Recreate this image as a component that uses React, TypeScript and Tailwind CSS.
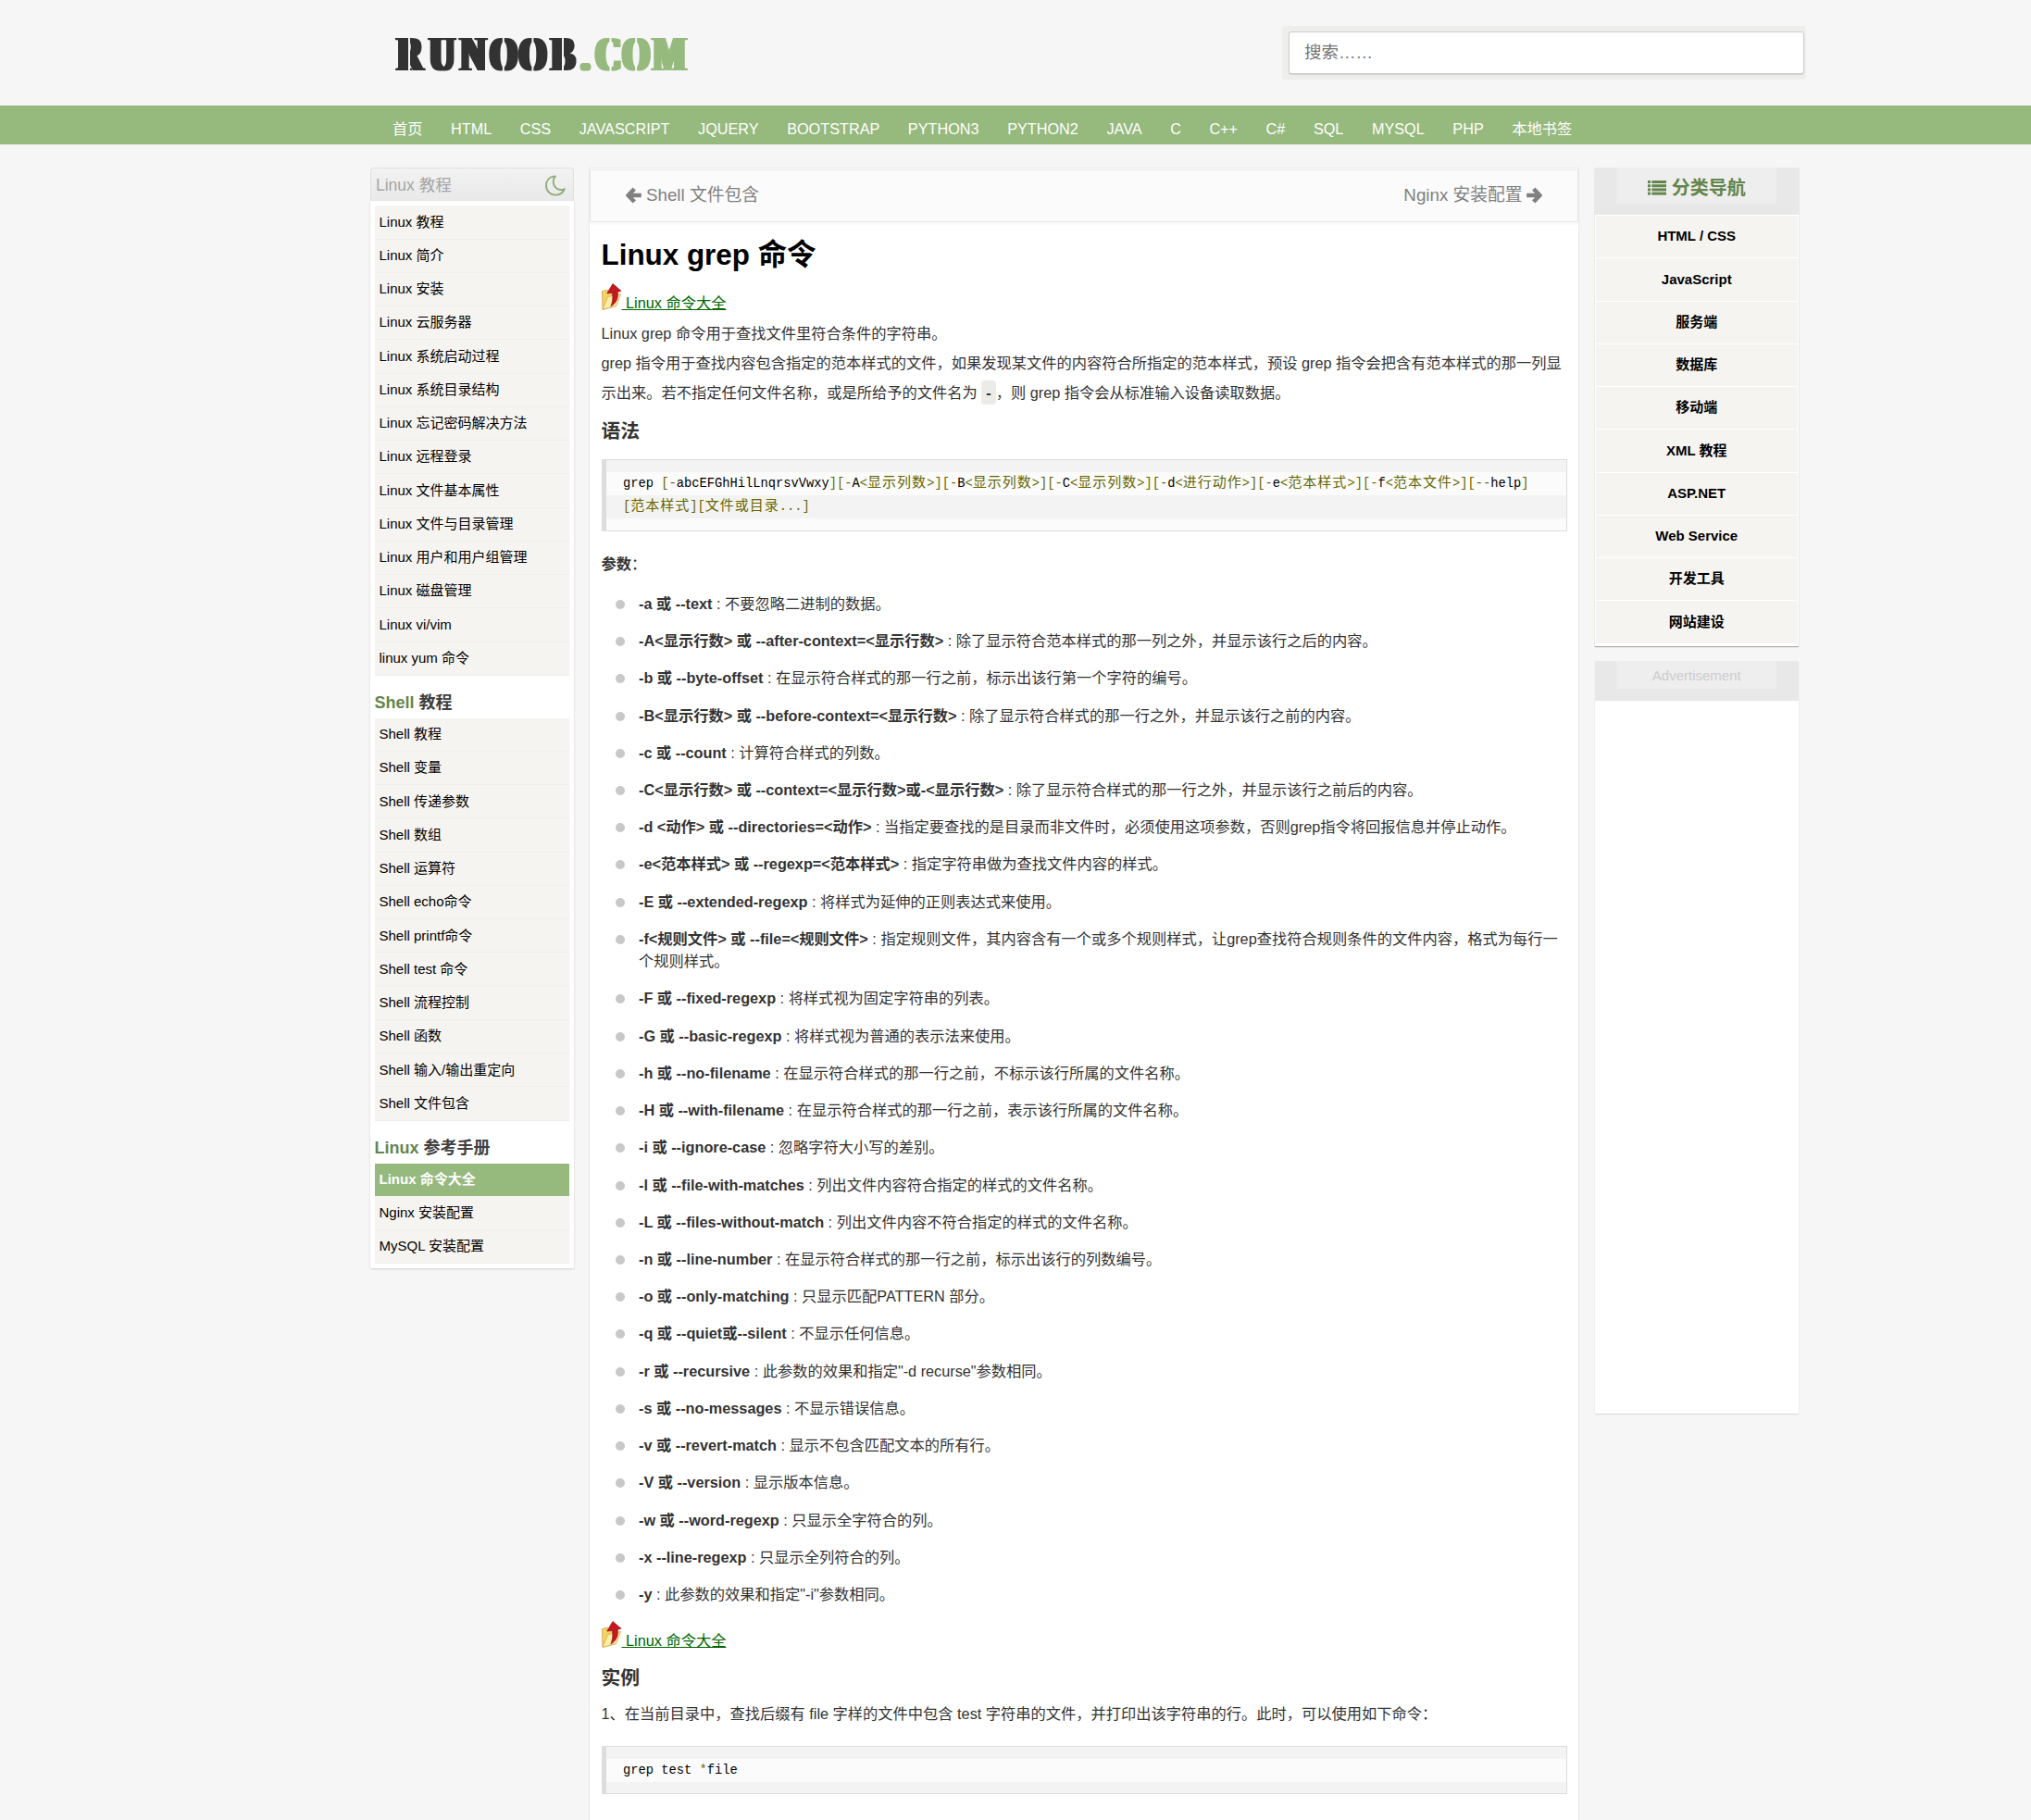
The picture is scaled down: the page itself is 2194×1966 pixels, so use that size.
import React from "react";

const NAV = [
  "首页", "HTML", "CSS", "JAVASCRIPT", "JQUERY", "BOOTSTRAP", "PYTHON3", "PYTHON2",
  "JAVA", "C", "C++", "C#", "SQL", "MYSQL", "PHP", "本地书签",
];

const LINUX = [
  "Linux 教程", "Linux 简介", "Linux 安装", "Linux 云服务器", "Linux 系统启动过程",
  "Linux 系统目录结构", "Linux 忘记密码解决方法", "Linux 远程登录", "Linux 文件基本属性",
  "Linux 文件与目录管理", "Linux 用户和用户组管理", "Linux 磁盘管理", "Linux vi/vim", "linux yum 命令",
];

const SHELL = [
  "Shell 教程", "Shell 变量", "Shell 传递参数", "Shell 数组", "Shell 运算符", "Shell echo命令",
  "Shell printf命令", "Shell test 命令", "Shell 流程控制", "Shell 函数", "Shell 输入/输出重定向", "Shell 文件包含",
];

const MANUAL = ["Linux 命令大全", "Nginx 安装配置", "MySQL 安装配置"];

const CATEGORIES = [
  "HTML / CSS", "JavaScript", "服务端", "数据库", "移动端", "XML 教程", "ASP.NET",
  "Web Service", "开发工具", "网站建设",
];

const OPTIONS: [string, string][] = [
  ["-a 或 --text", "不要忽略二进制的数据。"],
  ["-A<显示行数> 或 --after-context=<显示行数>", "除了显示符合范本样式的那一列之外，并显示该行之后的内容。"],
  ["-b 或 --byte-offset", "在显示符合样式的那一行之前，标示出该行第一个字符的编号。"],
  ["-B<显示行数> 或 --before-context=<显示行数>", "除了显示符合样式的那一行之外，并显示该行之前的内容。"],
  ["-c 或 --count", "计算符合样式的列数。"],
  ["-C<显示行数> 或 --context=<显示行数>或-<显示行数>", "除了显示符合样式的那一行之外，并显示该行之前后的内容。"],
  ["-d <动作> 或 --directories=<动作>", "当指定要查找的是目录而非文件时，必须使用这项参数，否则grep指令将回报信息并停止动作。"],
  ["-e<范本样式> 或 --regexp=<范本样式>", "指定字符串做为查找文件内容的样式。"],
  ["-E 或 --extended-regexp", "将样式为延伸的正则表达式来使用。"],
  ["-f<规则文件> 或 --file=<规则文件>", "指定规则文件，其内容含有一个或多个规则样式，让grep查找符合规则条件的文件内容，格式为每行一个规则样式。"],
  ["-F 或 --fixed-regexp", "将样式视为固定字符串的列表。"],
  ["-G 或 --basic-regexp", "将样式视为普通的表示法来使用。"],
  ["-h 或 --no-filename", "在显示符合样式的那一行之前，不标示该行所属的文件名称。"],
  ["-H 或 --with-filename", "在显示符合样式的那一行之前，表示该行所属的文件名称。"],
  ["-i 或 --ignore-case", "忽略字符大小写的差别。"],
  ["-l 或 --file-with-matches", "列出文件内容符合指定的样式的文件名称。"],
  ["-L 或 --files-without-match", "列出文件内容不符合指定的样式的文件名称。"],
  ["-n 或 --line-number", "在显示符合样式的那一行之前，标示出该行的列数编号。"],
  ["-o 或 --only-matching", "只显示匹配PATTERN 部分。"],
  ["-q 或 --quiet或--silent", "不显示任何信息。"],
  ["-r 或 --recursive", "此参数的效果和指定\"-d recurse\"参数相同。"],
  ["-s 或 --no-messages", "不显示错误信息。"],
  ["-v 或 --revert-match", "显示不包含匹配文本的所有行。"],
  ["-V 或 --version", "显示版本信息。"],
  ["-w 或 --word-regexp", "只显示全字符合的列。"],
  ["-x --line-regexp", "只显示全列符合的列。"],
  ["-y", "此参数的效果和指定\"-i\"参数相同。"],
];

/* Wordmark: bold serif thickened sideways, with stencil slits laid over it. */
function Logo() {
  return (
    <svg width="322" height="70" viewBox="0 -16 322 70" className="block">
      <defs>
        <filter id="heavy" x="-5%" y="-20%" width="110%" height="140%">
          <feMorphology operator="dilate" radius="3 0.3" />
        </filter>
      </defs>
      <g filter="url(#heavy)">
        <g fontFamily="'Liberation Serif', serif" fontWeight="700" fontSize="53" transform="scale(0.71 1)">
          <text y="39.2" x="7.3 56.2 103.5 148.5 193 241.500" fill="#333333">RUNOOB</text>
          <text y="39.2" x="287 309 350 396.500" fill="#96b97d">.COM</text>
        </g>
      </g>
      <g stroke="#f6f6f6" strokeWidth="2">
        <path d="M18 2v39M119.800 2v39M151.400 2v39M184 2v39M235.500 2v39M263.200 2v39" />
      </g>
    </svg>
  );
}

function Moon() {
  return (
    <svg width="22" height="23" viewBox="0 0 22 23" fill="none" className="block">
      <path
        d="M8.6 1.6C3.9 2.6 1 6.700 1 11.400C1 17 5.400 21.600 11 21.600C15.500 21.600 19.300 19 20.800 15.100C18.900 16 17.200 16.300 15.500 15.900C11.600 15.100 8.900 11.600 8.700 7.400C8.600 5.200 9.400 3.300 10.900 1.400C10.100 1.300 9.300 1.400 8.600 1.600Z"
        stroke="#8fad7c"
        strokeWidth="1.9"
        strokeLinejoin="round"
      />
    </svg>
  );
}

function Arrow({ flip = false }: { flip?: boolean }) {
  return (
    <svg width="17" height="18" viewBox="0 0 17 18" className={flip ? "block -scale-x-100" : "block"}>
      <path
        d="M9.300 2L2.700 9L9.300 16M3 9H16.800"
        fill="none"
        stroke="#808080"
        strokeWidth="4.600"
      />
    </svg>
  );
}

function ListIcon() {
  return (
    <svg width="20" height="16" viewBox="0 0 20 16" fill="#64854c" className="block">
      {[0, 4.2, 8.4, 12.6].map((y) => (
        <g key={y}>
          <rect x="0" y={y} width="3" height="3" />
          <rect x="4.300" y={y} width="15.700" height="3" />
        </g>
      ))}
    </svg>
  );
}

function FolderUp() {
  return (
    <svg width="22" height="29" viewBox="0 0 23 29" preserveAspectRatio="none" className="mb-px block">
      <path d="M0.500 8.500L7 7.200L8.500 9L15 8V25L1 28.300Z" fill="#f3d469" stroke="#cfa040" strokeWidth="0.800" />
      <path d="M1 28.300L7 14.500L21.500 11.500L16.500 24.500Z" fill="#fdf0a6" stroke="#d2a441" strokeWidth="0.800" />
      <path
        d="M12.500 0.500L22 8.300L18 9.200C19 16 16.500 21.500 10.300 24.800C12.500 20 12.900 15 12 10.500L6 11Z"
        fill="#c41a1e"
        stroke="#8e0f14"
        strokeWidth="0.700"
      />
    </svg>
  );
}

function SideList({ items, active }: { items: string[]; active?: string }) {
  return (
    <ul className="mx-[5px]">
      {items.map((t) => (
        <li
          key={t}
          className={
            t === active
              ? "flex h-[36.25px] items-center border-b-[1.25px] border-[#f6f4f0] bg-[#96b97d] px-[4.5px] text-[15px] font-bold text-white"
              : "flex h-[36.25px] items-center border-b-[1.25px] border-[#eeeeee] bg-[#f6f4f0] px-[4.5px] text-[15px] text-black"
          }
        >
          {t}
        </li>
      ))}
    </ul>
  );
}

function SideTitle({ green, rest }: { green: string; rest: string }) {
  return (
    <h2 className="flex h-[45.900px] items-end px-[4.5px] pb-[3.500px] text-[18px] leading-[26px] font-bold text-[#404040]">
      <span className="whitespace-pre text-[#64854c]">{green} </span>
      {rest}
    </h2>
  );
}

/* Letters are plain, punctuation and Chinese text share the olive colour. */
function Code({ text }: { text: string }) {
  return (
    <>
      {(text.match(/[A-Za-z]+|[\u4e00-\u9fa5]+|[^A-Za-z\u4e00-\u9fa5]+/g) ?? []).map((part, i) => {
        if (/[A-Za-z]/.test(part)) return <span key={i}>{part}</span>;
        if (/[\u4e00-\u9fa5]/.test(part))
          return (
            <span key={i} className="text-[15px] tracking-[1px] text-[#666600]">
              {part}
            </span>
          );
        return (
          <span key={i} className="text-[#666600]">
            {part}
          </span>
        );
      })}
    </>
  );
}

function Pre({ lines }: { lines: string[] }) {
  return (
    <div className="border border-l-[5px] border-[#dddddd] bg-[#f3f3f3] pt-[12.5px] font-['Liberation_Mono','Noto_Sans_CJK_SC',monospace] text-[13.75px] text-black">
      {lines.map((l, i) => (
        <div
          key={l}
          className={
            i % 2
              ? "h-[25px] bg-[#f3f3f3] pl-[18.5px] leading-[25px] whitespace-pre"
              : "h-[25px] bg-[#fbfbfb] pl-[18.5px] leading-[25px] whitespace-pre"
          }
        >
          <Code text={l} />
        </div>
      ))}
      <div className={lines.length % 2 ? "h-[12.5px] bg-[#f3f3f3]" : "h-[13.5px] bg-[#fbfbfb]"} />
    </div>
  );
}

function UpLink() {
  return (
    <p className="flex h-[32.5px] items-end">
      <FolderUp />
      <a className="leading-[18px] whitespace-pre text-[#006600] underline"> Linux 命令大全</a>
    </p>
  );
}

export default function App() {
  return (
    <div className="h-[1966px] w-[2194px] overflow-hidden bg-[#f6f6f6] font-['Liberation_Sans','Noto_Sans_CJK_SC',sans-serif] text-[16.25px] text-[#333333]">
      <header className="flex h-[114px] justify-between pl-[424px] pr-[243px]">
        <div className="pt-[21px]">
          <Logo />
        </div>
        <div className="mt-[28px] h-[58px] w-[566px] rounded-[4px] bg-[#eeeeec] py-[6px] pr-[2px] pl-[7px]">
          <div className="flex h-[46px] items-center rounded-[3px] border border-[#cccccc] bg-white pb-px pl-[16px] text-[18.500px] text-[#757575] shadow-[0_1px_1px_rgba(0,0,0,0.12)]">
            搜索……
          </div>
        </div>
      </header>

      <nav className="flex h-[42px] gap-[30.500px] bg-[#96b97d] pt-[8px] pl-[424px] leading-[34px] text-white">
        {NAV.map((n) => (
          <a key={n}>{n}</a>
        ))}
      </nav>

      <main className="flex items-start pt-[25px] pl-[400px]">
        <aside className="w-[220px]">
          <div className="flex h-[36px] items-center justify-between rounded-t-[4px] border border-b-0 border-[#e0e0e0] bg-linear-to-b from-[#f2f2f2] to-[#e9e9e9] pt-px pr-[8px] pl-[5px] text-[17.5px] text-[#a5a5a5]">
            <span>Linux 教程</span>
            <Moon />
          </div>
          <div className="bg-white pt-[5.300px] pb-[5px] shadow-[0_1px_2px_rgba(0,0,0,0.16)]">
            <SideList items={LINUX} />
            <SideTitle green="Shell" rest="教程" />
            <SideList items={SHELL} />
            <SideTitle green="Linux" rest="参考手册" />
            <SideList items={MANUAL} active="Linux 命令大全" />
          </div>
        </aside>

        <article className="ml-[16px] h-[1785px] w-[1070px] border border-b-0 border-[#ebebeb] bg-white pt-[1px]">
          <div className="flex h-[57px] items-start justify-between border border-[#e5e8ed] bg-[#fbfbfb] pt-[12px] pr-[38.500px] pl-[38px] text-[18.75px] leading-[30px] text-[#808080] shadow-[0_2px_3px_rgba(0,0,0,0.03)]">
            <a className="flex items-center gap-[5px]">
              <Arrow />
              Shell 文件包含
            </a>
            <a className="flex items-center gap-[4px]">
              Nginx 安装配置
              <Arrow flip />
            </a>
          </div>
          <div className="pr-[12px] pl-[12.500px]">
            <h1 className="pt-[13px] text-[31.400px] leading-[46px] font-bold text-black">Linux grep 命令</h1>
            <div className="pt-[4px]">
              <UpLink />
            </div>
            <p className="mt-[8px] leading-[32.25px]">Linux grep 命令用于查找文件里符合条件的字符串。</p>
            <p className="leading-[32.25px]">
              grep 指令用于查找内容包含指定的范本样式的文件，如果发现某文件的内容符合所指定的范本样式，预设 grep 指令会把含有范本样式的那一列显示出来。若不指定任何文件名称，或是所给予的文件名为{" "}
              <code className="rounded-[4px] bg-[#ebebe8] px-[5px] py-[4px] font-['Liberation_Sans',sans-serif] font-bold">-</code>
              ，则 grep 指令会从标准输入设备读取数据。
            </p>
            <h2 className="mt-[10px] text-[20.8px] leading-[32px] font-bold">语法</h2>
            <div className="mt-[14px]">
              <Pre
                lines={[
                  "grep [-abcEFGhHilLnqrsvVwxy][-A<显示列数>][-B<显示列数>][-C<显示列数>][-d<进行动作>][-e<范本样式>][-f<范本文件>][--help]",
                  "[范本样式][文件或目录...]",
                ]}
              />
            </div>
            <p className="mt-[19px] leading-[32.25px]">
              <b>参数</b>：
            </p>
            <ul className="mt-[6.5px]">
              {OPTIONS.map(([name, desc]) => (
                <li key={name} className="flex py-[7.930px] pl-[15.500px] leading-[24.375px]">
                  <span className="mt-[8px] mr-[15px] size-[10px] shrink-0 rounded-full bg-[#c8c8c8]" />
                  <span>
                    <b>{name}</b> : {desc}
                  </span>
                </li>
              ))}
            </ul>
            <div className="pt-[6px]">
              <UpLink />
            </div>
            <h2 className="mt-[16px] text-[20.8px] leading-[32px] font-bold">实例</h2>
            <p className="mt-[6px] leading-[32.25px]">
              1、在当前目录中，查找后缀有 file 字样的文件中包含 test 字符串的文件，并打印出该字符串的行。此时，可以使用如下命令：
            </p>
            <div className="mt-[19px]">
              <Pre lines={["grep test *file"]} />
            </div>
          </div>
        </article>

        <aside className="ml-[16.500px] w-[220.500px]">
          <section className="bg-white shadow-[0_1px_1px_rgba(0,0,0,0.3)]">
            <div className="h-[51px] bg-[#e8e8e8]">
              <h2 className="mx-auto flex h-[39px] w-[173px] items-center justify-center gap-[6px] bg-[#eeeeee] pt-[4px] text-[20px] font-bold text-[#64854c]">
                <ListIcon />
                分类导航
              </h2>
            </div>
            <div className="px-px pt-px pb-[2px]">
              {CATEGORIES.map((c) => (
                <a
                  key={c}
                  className="flex h-[46.25px] items-center justify-center border-b border-white bg-[#f6f4f0] text-[15px] font-bold text-black"
                >
                  {c}
                </a>
              ))}
            </div>
          </section>
          <section className="mt-[16.5px] h-[813px] bg-white shadow-[0_1px_1px_rgba(0,0,0,0.12)]">
            <div className="h-[43px] bg-[#e8e8e8]">
              <div className="mx-auto flex h-[30px] w-[173px] items-center justify-center bg-[#eeeeee] pt-[2px] text-[15px] text-[#cccccc]">
                Advertisement
              </div>
            </div>
          </section>
        </aside>
      </main>
    </div>
  );
}
